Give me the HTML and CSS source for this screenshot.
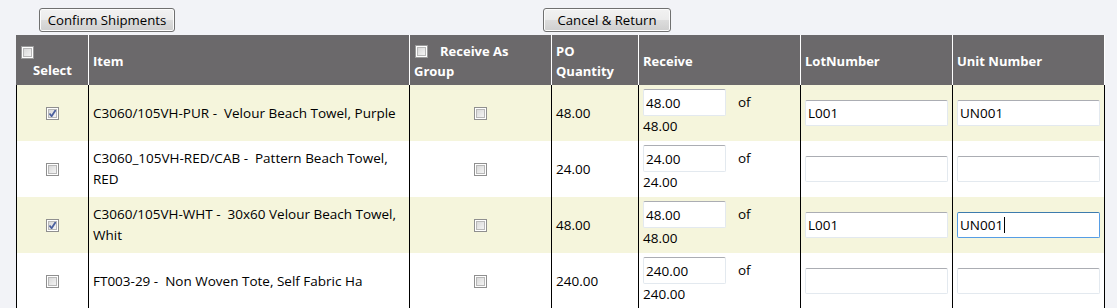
FILE: index.html
```html
<!DOCTYPE html>
<html lang="en">
<head>
    <meta charset="UTF-8">
    <title>Receive Shipments</title>
    <link rel="stylesheet" href="styles.css">
</head>
<body>

<!-- Action buttons -->
<div class="toolbar">
    <button class="btn btn-confirm">Confirm Shipments</button>
    <button class="btn btn-cancel">Cancel &amp; Return</button>
</div>

<!-- Receiving grid -->
<table class="grid">
    <colgroup>
        <col class="c-select">
        <col class="c-item">
        <col class="c-group">
        <col class="c-qty">
        <col class="c-receive">
        <col class="c-lot">
        <col class="c-unit">
    </colgroup>
    <thead>
        <tr>
            <th class="th-select">
                <span class="th-select-box"><input type="checkbox" class="cb"></span>
                <span class="th-select-label">Select</span>
            </th>
            <th>Item</th>
            <th><input type="checkbox" class="cb th-group-cb">Receive As<br>Group</th>
            <th>PO<br>Quantity</th>
            <th>Receive</th>
            <th>LotNumber</th>
            <th>Unit Number</th>
        </tr>
    </thead>
    <tbody>
        <tr class="alt">
            <td class="center"><input type="checkbox" class="cb" checked></td>
            <td>C3060/105VH-PUR - &nbsp;Velour Beach Towel, Purple</td>
            <td class="center"><input type="checkbox" class="cb"></td>
            <td>48.00</td>
            <td><input type="text" class="qty-input" value="48.00"><span class="of">of</span><br>48.00</td>
            <td><input type="text" class="text-input" value="L001"></td>
            <td><input type="text" class="text-input" value="UN001"></td>
        </tr>
        <tr>
            <td class="center"><input type="checkbox" class="cb"></td>
            <td>C3060_105VH-RED/CAB - &nbsp;Pattern Beach Towel, RED</td>
            <td class="center"><input type="checkbox" class="cb"></td>
            <td>24.00</td>
            <td><input type="text" class="qty-input" value="24.00"><span class="of">of</span><br>24.00</td>
            <td><input type="text" class="text-input" value=""></td>
            <td><input type="text" class="text-input" value=""></td>
        </tr>
        <tr class="alt">
            <td class="center"><input type="checkbox" class="cb" checked></td>
            <td>C3060/105VH-WHT - &nbsp;30x60 Velour Beach Towel, Whit</td>
            <td class="center"><input type="checkbox" class="cb"></td>
            <td>48.00</td>
            <td><input type="text" class="qty-input" value="48.00"><span class="of">of</span><br>48.00</td>
            <td><input type="text" class="text-input" value="L001"></td>
            <td>
                <div class="caret-wrap">
                    <input type="text" class="text-input focused" value="UN001">
                    <span class="caret"></span>
                </div>
            </td>
        </tr>
        <tr>
            <td class="center"><input type="checkbox" class="cb"></td>
            <td>FT003-29 - &nbsp;Non Woven Tote, Self Fabric Ha</td>
            <td class="center"><input type="checkbox" class="cb"></td>
            <td>240.00</td>
            <td><input type="text" class="qty-input" value="240.00"><span class="of">of</span><br>240.00</td>
            <td><input type="text" class="text-input" value=""></td>
            <td><input type="text" class="text-input" value=""></td>
        </tr>
    </tbody>
</table>

</body>
</html>
```

FILE: styles.css
```css
body {
    font-family: "Open Sans", "Liberation Sans", sans-serif;
    font-size: 13.5px;
    margin: 0;
    background: #f2f3f7;
    color: #000;
}
.toolbar {
    display: flex;
    padding: 8px 0 3px 39px;
}
.btn {
    height: 24px;
    padding: 0;
    font-family: inherit;
    font-size: 13.2px;
    color: #000;
    border: 1px solid #707070;
    border-radius: 3px;
    background: linear-gradient(#f2f2f2 0%, #ebebeb 50%, #dddddd 50%, #cfcfcf 100%);
    box-shadow: inset 0 0 0 1px #fcfcfc;
}
.btn-confirm {
    width: 136px;
}
.btn-cancel {
    width: 128px;
    margin-left: 368px;
}
.grid {
    margin-left: 16px;
    width: 1089px;
    table-layout: fixed;
    border-collapse: collapse;
}
.c-select { width: 72px; }
.c-item { width: 321px; }
.c-group { width: 142px; }
.c-qty { width: 87px; }
.c-receive { width: 162px; }
.c-lot { width: 152px; }
.c-unit { width: 152px; }
.grid th {
    height: 48px;
    padding: 2px 4px 0 4px;
    background: #6b696b;
    color: #fff;
    font-size: 13px;
    font-weight: bold;
    text-align: left;
    line-height: 20px;
    border-left: 1px solid #fff;
    border-right: 1px solid #fff;
}
.grid th:first-child {
    border-left-color: #6b696b;
}
.grid th .cb {
    border-color: #9a9a9a;
}
.grid th .th-group-cb {
    margin: 0 12px 0 1px;
    position: relative;
    top: -1px;
}
.th-select-box {
    display: block;
    line-height: 18px;
}
.th-select-label {
    display: block;
    text-align: center;
}
.grid td {
    height: 48px;
    padding: 4px 4px;
    line-height: 21px;
    vertical-align: middle;
    border-left: 1px solid #000;
    border-right: 1px solid #000;
    background: #fff;
}
.grid tr.alt td {
    background: #f5f5dc;
}
.center {
    text-align: center;
}
.cb {
    appearance: none;
    width: 13px;
    height: 13px;
    margin: 0;
    vertical-align: middle;
    border: 1px solid #8f8f8f;
    background: linear-gradient(135deg, #d2d2d2, #fbfbfb);
    box-shadow: inset 0 0 0 1px #fff, inset 0 0 0 2px #b8b8b8;
}
.cb:checked {
    background: url("data:image/svg+xml;utf8,<svg xmlns='http://www.w3.org/2000/svg' width='11' height='11'><path d='M2.5 5.5 L4.6 8.2 L8.8 1.8' fill='none' stroke='%234a5f9e' stroke-width='1.8'/></svg>") no-repeat center, linear-gradient(135deg, #d2d2d2, #fbfbfb);
}
.qty-input, .text-input {
    font-family: inherit;
    font-size: 13.5px;
    color: #000;
    height: 27px;
    margin: 0;
    padding: 0 2px;
    box-sizing: border-box;
    border: 1px solid #e3e9ef;
    border-top-color: #abadb3;
    border-radius: 2px;
    background: #fff;
    outline: none;
    vertical-align: middle;
}
.qty-input {
    width: 83px;
}
.of {
    margin-left: 12px;
    vertical-align: middle;
}
.text-input {
    width: 100%;
    height: 26px;
}
.text-input.focused {
    border-color: #569de5;
    border-top-color: #3d7bad;
}
.caret-wrap {
    position: relative;
}
.caret {
    position: absolute;
    left: 47px;
    top: 5px;
    width: 1px;
    height: 16px;
    background: #000;
}
```
